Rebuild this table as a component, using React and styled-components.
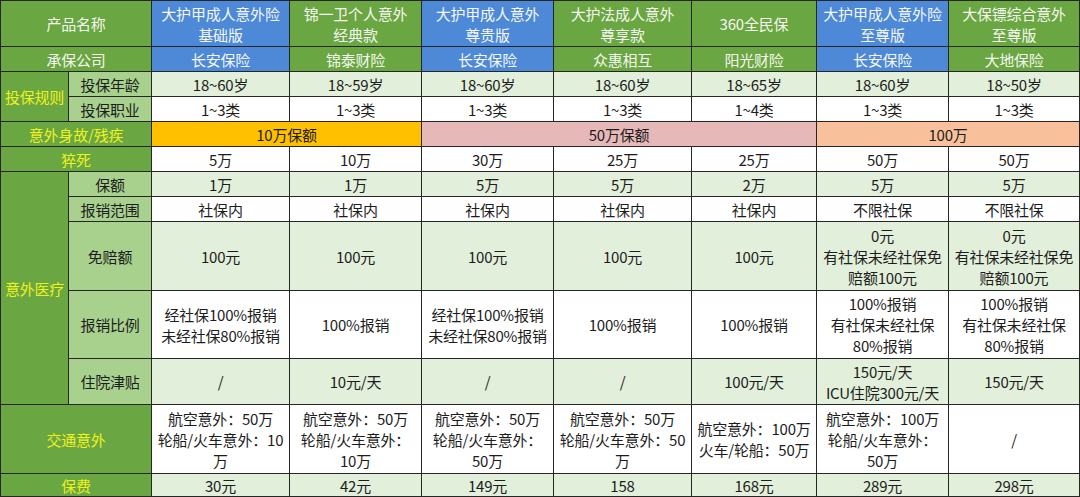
import React from "react";
import styled, { createGlobalStyle } from "styled-components";

const GlobalStyle = createGlobalStyle`
  html, body {
    margin: 0;
    padding: 0;
    background: #ffffff;
  }
  body {
    font-family: "Noto Sans CJK SC", "Noto Sans", sans-serif;
  }
`;

const tones = {
  head: { bg: "#6aa641", color: "#f4f7f0" },
  blue: { bg: "#4d89d6", color: "#f4f7fb" },
  group: { bg: "#6aa641", color: "#eef21e" },
  sub: { bg: "#a9d18e", color: "#1d1d1d" },
  light: { bg: "#e2efda", color: "#1d1d1d" },
  white: { bg: "#ffffff", color: "#1d1d1d" },
  yellow: { bg: "#ffc000", color: "#1d1d1d" },
  pink: { bg: "#e6b8b7", color: "#1d1d1d" },
  orange: { bg: "#f8c19b", color: "#1d1d1d" },
};

const Table = styled.div`
  display: grid;
  grid-template-columns: 67px 82px 137px 131px 131px 137px 124px 131px 130px;
  grid-template-rows: 45px repeat(7, 24px) 68px 67px 45px 68px 22px;
  gap: 1px;
  padding: 1px;
  width: 1080px;
  height: 497px;
  box-sizing: border-box;
  background: #262626;
`;

const Cell = styled.div`
  grid-column: span ${(p) => p.$cols || 1};
  grid-row: span ${(p) => p.$rows || 1};
  display: flex;
  flex-direction: column;
  align-items: center;
  justify-content: center;
  text-align: center;
  background: ${(p) => tones[p.$tone].bg};
  color: ${(p) => tones[p.$tone].color};
  font-size: 15px;
  line-height: 21px;
  white-space: nowrap;
  overflow: hidden;
  letter-spacing: -0.2px;
`;

const Line = styled.span`
  display: block;
`;

const headTones = ["blue", "head", "blue", "head", "head", "blue", "head"];

const products = [
  ["大护甲成人意外险", "基础版"],
  ["锦一卫个人意外", "经典款"],
  ["大护甲成人意外", "尊贵版"],
  ["大护法成人意外", "尊享款"],
  ["360全民保"],
  ["大护甲成人意外险", "至尊版"],
  ["大保镖综合意外", "至尊版"],
];

const companies = ["长安保险", "锦泰财险", "长安保险", "众惠相互", "阳光财险", "长安保险", "大地保险"];

const rows = [
  { group: "投保规则", groupRows: 2, label: "投保年龄", tone: "light", values: ["18~60岁", "18~59岁", "18~60岁", "18~60岁", "18~65岁", "18~60岁", "18~50岁"] },
  { label: "投保职业", tone: "white", values: ["1~3类", "1~3类", "1~3类", "1~3类", "1~4类", "1~3类", "1~3类"] },
];

const medical = [
  { label: "保额", tone: "light", values: [["1万"], ["1万"], ["5万"], ["5万"], ["2万"], ["5万"], ["5万"]] },
  { label: "报销范围", tone: "white", values: [["社保内"], ["社保内"], ["社保内"], ["社保内"], ["社保内"], ["不限社保"], ["不限社保"]] },
  {
    label: "免赔额",
    tone: "light",
    values: [["100元"], ["100元"], ["100元"], ["100元"], ["100元"], ["0元", "有社保未经社保免", "赔额100元"], ["0元", "有社保未经社保免", "赔额100元"]],
  },
  {
    label: "报销比例",
    tone: "white",
    values: [
      ["经社保100%报销", "未经社保80%报销"],
      ["100%报销"],
      ["经社保100%报销", "未经社保80%报销"],
      ["100%报销"],
      ["100%报销"],
      ["100%报销", "有社保未经社保", "80%报销"],
      ["100%报销", "有社保未经社保", "80%报销"],
    ],
  },
  {
    label: "住院津贴",
    tone: "light",
    values: [["/"], ["10元/天"], ["/"], ["/"], ["100元/天"], ["150元/天", "ICU住院300元/天"], ["150元/天"]],
  },
];

const traffic = [
  ["航空意外：50万", "轮船/火车意外：10", "万"],
  ["航空意外：50万", "轮船/火车意外：", "10万"],
  ["航空意外：50万", "轮船/火车意外：", "50万"],
  ["航空意外：50万", "轮船/火车意外：50", "万"],
  ["航空意外：100万", "火车/轮船：50万"],
  ["航空意外：100万", "轮船/火车意外：", "50万"],
  ["/"],
];

const deathValues = ["5万", "10万", "30万", "25万", "25万", "50万", "50万"];
const fees = ["30元", "42元", "149元", "158", "168元", "289元", "298元"];

const Lines = ({ items }) => items.map((t, i) => <Line key={i}>{t}</Line>);

export default function App() {
  return (
    <>
      <GlobalStyle />
      <Table>
        <Cell $tone="head" $cols={2}>产品名称</Cell>
        {products.map((p, i) => (
          <Cell key={"p" + i} $tone={headTones[i]}>
            <Lines items={p} />
          </Cell>
        ))}

        <Cell $tone="head" $cols={2}>承保公司</Cell>
        {companies.map((c, i) => (
          <Cell key={"c" + i} $tone={headTones[i]}>{c}</Cell>
        ))}

        {rows.map((r) => (
          <React.Fragment key={r.label}>
            {r.group && (
              <Cell $tone="group" $rows={r.groupRows}>{r.group}</Cell>
            )}
            <Cell $tone="sub">{r.label}</Cell>
            {r.values.map((v, i) => (
              <Cell key={i} $tone={r.tone}>{v}</Cell>
            ))}
          </React.Fragment>
        ))}

        <Cell $tone="group" $cols={2}>意外身故/残疾</Cell>
        <Cell $tone="yellow" $cols={2}>10万保额</Cell>
        <Cell $tone="pink" $cols={3}>50万保额</Cell>
        <Cell $tone="orange" $cols={2}>100万</Cell>

        <Cell $tone="group" $cols={2}>猝死</Cell>
        {deathValues.map((v, i) => (
          <Cell key={"d" + i} $tone="white">{v}</Cell>
        ))}

        <Cell $tone="group" $rows={5}>意外医疗</Cell>
        {medical.map((r) => (
          <React.Fragment key={r.label}>
            <Cell $tone="sub">{r.label}</Cell>
            {r.values.map((v, i) => (
              <Cell key={i} $tone={r.tone}>
                <Lines items={v} />
              </Cell>
            ))}
          </React.Fragment>
        ))}

        <Cell $tone="group" $cols={2}>交通意外</Cell>
        {traffic.map((v, i) => (
          <Cell key={"t" + i} $tone="white">
            <Lines items={v} />
          </Cell>
        ))}

        <Cell $tone="group" $cols={2}>保费</Cell>
        {fees.map((v, i) => (
          <Cell key={"f" + i} $tone="light">{v}</Cell>
        ))}
      </Table>
    </>
  );
}
